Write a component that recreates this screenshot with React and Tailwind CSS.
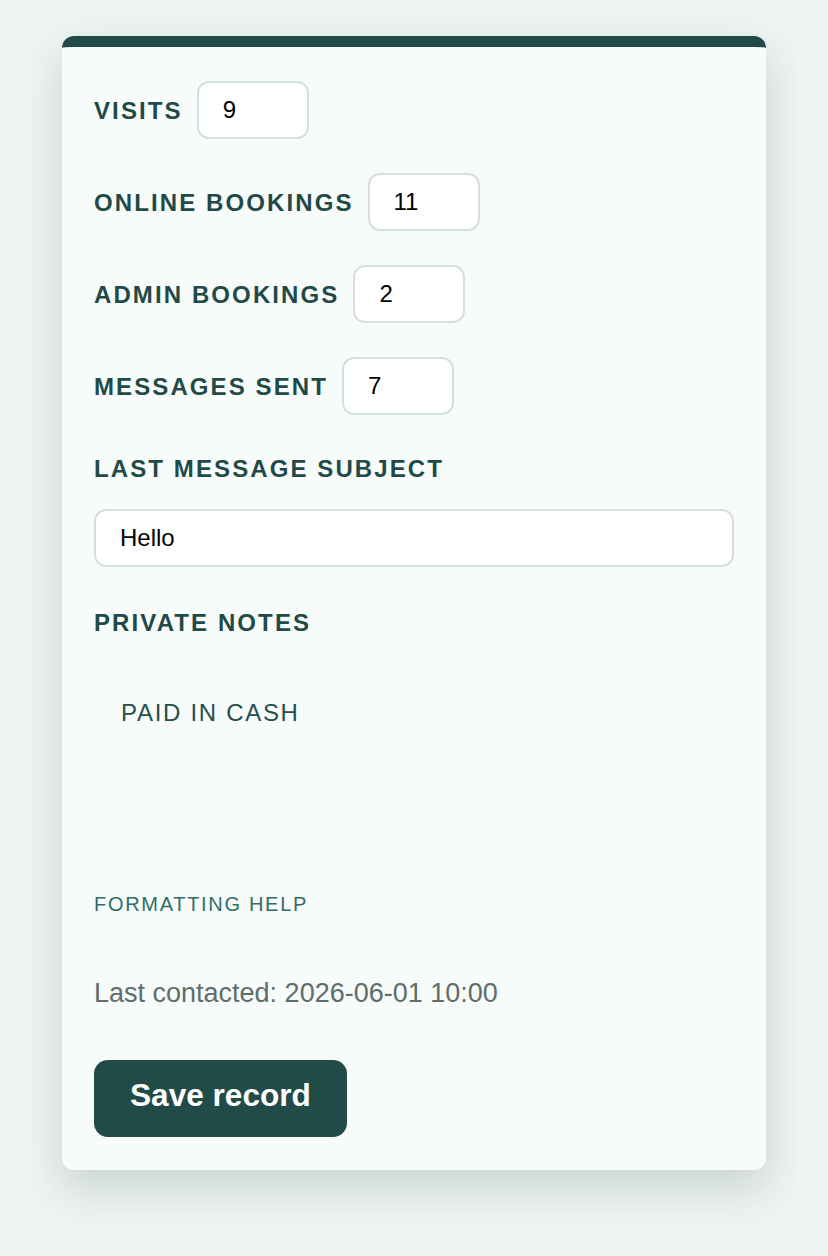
import { useState } from "react";

const FONT = { fontFamily: '"Liberation Sans", Arial, sans-serif' };

const COUNTERS = [
  { id: "visits", label: "Visits", value: "9" },
  { id: "online", label: "Online bookings", value: "11" },
  { id: "admin", label: "Admin bookings", value: "2" },
  { id: "messages", label: "Messages sent", value: "7" },
];

function Label({ children, htmlFor, className = "" }) {
  return (
    <label
      htmlFor={htmlFor}
      className={`block text-[24px] leading-[28px] font-bold uppercase tracking-[2.1px] text-[#1f4a47] ${className}`}
    >
      {children}
    </label>
  );
}

export default function App() {
  const [values, setValues] = useState(
    Object.fromEntries(COUNTERS.map((c) => [c.id, c.value]))
  );
  const [subject, setSubject] = useState("Hello");
  const [notes, setNotes] = useState("PAID IN CASH");

  return (
    <div className="min-h-screen bg-[#eef4f3] pt-[6px]" style={FONT}>
      <div className="mx-[32px] overflow-hidden px-[30px] pt-[30px] pb-[54px]">
        <div className="rounded-[12px] border-t-[11px] border-[#214b49] bg-[#f7fbfa] px-[32px] pt-[34px] pb-[33px] shadow-[0_18px_44px_rgba(30,60,55,0.18)]">
          {/* Counters */}
          <div className="flex flex-col gap-[34px]">
            {COUNTERS.map((c) => (
              <div key={c.id} className="flex items-center gap-[14px]">
                <Label htmlFor={c.id} className="pt-[2px]">
                  {c.label}
                </Label>
                <input
                  id={c.id}
                  type="text"
                  value={values[c.id]}
                  onChange={(e) =>
                    setValues((v) => ({ ...v, [c.id]: e.target.value }))
                  }
                  className="h-[58px] w-[112px] rounded-[12px] border-2 border-[#d5e0dd] bg-white px-[24px] text-[24px] text-black outline-none"
                />
              </div>
            ))}
          </div>

          {/* Subject */}
          <Label htmlFor="subject" className="mt-[40px]">
            Last message subject
          </Label>
          <input
            id="subject"
            type="text"
            value={subject}
            onChange={(e) => setSubject(e.target.value)}
            className="mt-[26px] block h-[58px] w-full rounded-[12px] border-2 border-[#d5e0dd] bg-white px-[24px] text-[24px] text-black outline-none"
          />

          {/* Notes */}
          <Label htmlFor="notes" className="mt-[42px]">
            Private notes
          </Label>
          <textarea
            id="notes"
            value={notes}
            onChange={(e) => setNotes(e.target.value)}
            className="mt-[26px] block h-[200px] w-full resize-none bg-transparent px-[27px] pt-[32px] text-[24px] leading-[36px] uppercase tracking-[1.7px] text-[#24504c] outline-none"
          />

          <a
            href="#"
            className="mt-[29px] block text-[20px] leading-[24px] uppercase tracking-[1.7px] text-[#2f6e68]"
          >
            Formatting help
          </a>

          <p className="mt-[61px] text-[27px] leading-[32px] text-[#5d6e6b]">
            Last contacted: 2026-06-01 10:00
          </p>

          <button
            type="button"
            className="mt-[51px] flex h-[77px] items-center rounded-[14px] bg-[#214b49] px-[36px] pb-[6px] text-[31.6px] font-bold text-white"
          >
            Save record
          </button>
        </div>
      </div>
    </div>
  );
}
